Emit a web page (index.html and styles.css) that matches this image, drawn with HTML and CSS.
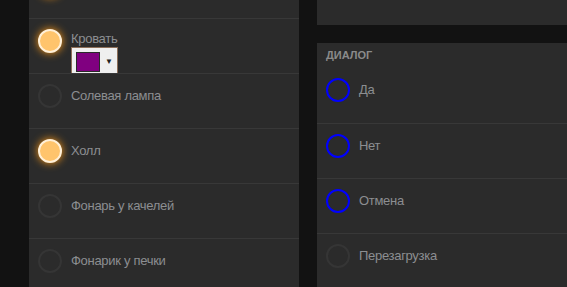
FILE: index.html
```html
<!DOCTYPE html>
<html lang="en">
<head>
    <meta charset="UTF-8">
    <title>Освещение</title>
    <link rel="stylesheet" href="styles.css">
</head>
<body>
    <div class="page">
        <div class="panel left">
            <div class="row hidden-top">
                <span class="dot on"></span>
            </div>
            <div class="row">
                <span class="dot on"></span>
                <div class="label-block">
                    <span class="label">Кровать</span>
                    <div class="picker">
                        <span class="swatch"></span>
                        <span class="arrow">▼</span>
                    </div>
                </div>
            </div>
            <div class="row">
                <span class="dot"></span>
                <span class="label">Солевая лампа</span>
            </div>
            <div class="row">
                <span class="dot on"></span>
                <span class="label">Холл</span>
            </div>
            <div class="row">
                <span class="dot"></span>
                <span class="label">Фонарь у качелей</span>
            </div>
            <div class="row">
                <span class="dot"></span>
                <span class="label">Фонарик у печки</span>
            </div>
        </div>
        <div class="side">
            <div class="panel top-card"></div>
            <div class="panel dialog">
                <div class="title">Диалог</div>
                <div class="row first">
                    <span class="dot blue"></span>
                    <span class="label">Да</span>
                </div>
                <div class="row">
                    <span class="dot blue"></span>
                    <span class="label">Нет</span>
                </div>
                <div class="row">
                    <span class="dot blue"></span>
                    <span class="label">Отмена</span>
                </div>
                <div class="row">
                    <span class="dot"></span>
                    <span class="label">Перезагрузка</span>
                </div>
            </div>
        </div>
    </div>
</body>
</html>
```

FILE: styles.css
```css
body {
    margin: 0;
    background-color: #121212;
    font-family: 'Liberation Sans', Arial, sans-serif;
    color: #8c8e91;
    overflow: hidden;
}
.page {
    display: flex;
    gap: 18px;
    padding-left: 29px;
    height: 287px;
    overflow: hidden;
}
.panel {
    background-color: #2b2b2b;
}
.left {
    width: 270px;
    margin-top: -37px;
    flex-shrink: 0;
}
.side {
    flex: 1;
    display: flex;
    flex-direction: column;
    gap: 18px;
}
.top-card {
    height: 25px;
    flex-shrink: 0;
}
.dialog {
    flex: 1 0 auto;
}
.title {
    font-size: 11px;
    font-weight: bold;
    text-transform: uppercase;
    color: #8a8a8a;
    padding: 6px 9px 0;
    height: 19px;
}
.row {
    display: flex;
    align-items: flex-start;
    gap: 9px;
    height: 55px;
    box-sizing: border-box;
    padding: 10px 9px 0;
    border-top: 1px solid #383838;
}
.row.first,
.hidden-top {
    border-top: none;
}
.dot {
    width: 24px;
    height: 24px;
    box-sizing: border-box;
    border-radius: 50%;
    border: 2px solid #353535;
    flex-shrink: 0;
}
.dot.on {
    background-color: #ffc46c;
    border-color: #fff0d8;
    box-shadow: 0 0 8px #ff9a14;
}
.dot.blue {
    border-color: #0000ff;
}
.label {
    font-size: 13px;
    letter-spacing: -0.3px;
    line-height: 23px;
}
.label-block {
    display: flex;
    flex-direction: column;
}
.label-block .label {
    line-height: 16px;
    margin-top: 2px;
}
.picker {
    display: flex;
    align-items: center;
    gap: 5px;
    width: 47px;
    height: 26px;
    box-sizing: border-box;
    background-color: #efefef;
    border: 1px solid #8c6e58;
    border-bottom: none;
    padding: 3px 4px 1px;
}
.swatch {
    width: 24px;
    height: 20px;
    box-sizing: border-box;
    background-color: #800080;
    border: 1px solid #2a2a2a;
}
.arrow {
    font-size: 8px;
    color: #222;
}
```
